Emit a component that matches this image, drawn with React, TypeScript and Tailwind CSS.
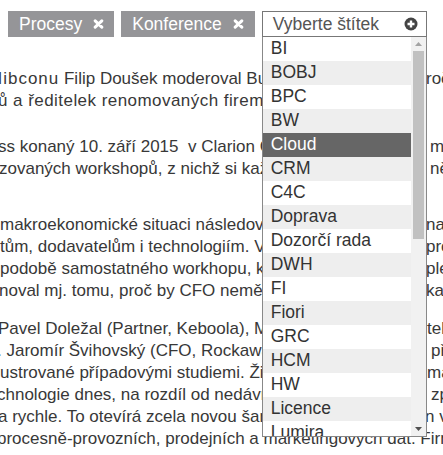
import React from "react";

function Tag({ label, pr }: { label: string; pr: string }) {
  return (
    <div className={"flex h-[26px] items-center gap-[11px] bg-[#959598] pl-[11px] text-white " + pr}>
      <span>{label}</span>
      <svg width="11" height="10" viewBox="0 0 11 10">
        <path d="M2.2 1.8 L8.8 8.2 M8.8 1.8 L2.2 8.2" stroke="#ffffff" strokeWidth="3" strokeLinecap="round" fill="none" />
      </svg>
    </div>
  );
}

const items = [
  "BI",
  "BOBJ",
  "BPC",
  "BW",
  "Cloud",
  "CRM",
  "C4C",
  "Doprava",
  "Dozorčí rada",
  "DWH",
  "FI",
  "Fiori",
  "GRC",
  "HCM",
  "HW",
  "Licence",
  "Lumira",
];

export default function App() {
  return (
    <div className="relative h-[455px] w-[443px] overflow-hidden bg-white font-['Liberation_Sans',Arial,sans-serif] text-[17px] text-[#383838]">
      <div className="flex items-start pl-[8px] pt-[11px] text-[17.5px]">
        <Tag label="Procesy" pr="pr-[10px]" />
        <div className="ml-[7px]">
          <Tag label="Konference" pr="pr-[11px]" />
        </div>
        <div className="relative z-10 ml-[7px] w-[165px]">
          <div className="flex h-[26px] items-center justify-between border border-[#777] bg-white pl-[10px] pr-[8px] text-[#555]">
            <span>Vyberte štítek</span>
            <svg width="14" height="14" viewBox="0 0 14 14">
              <circle cx="7" cy="7" r="6.5" fill="#444" />
              <path d="M7 3.5 V10.5 M3.5 7 H10.5" stroke="#fff" strokeWidth="2.4" fill="none" />
            </svg>
          </div>
          <div className="absolute left-0 top-full flex h-[400px] w-full overflow-hidden border-x border-b border-[#888] bg-white">
            <div className="flex flex-1 flex-col">
              {items.map((it, i) => (
                <div
                  key={it}
                  className={
                    "h-[24px] shrink-0 pl-[8px] leading-[22px] " +
                    (it === "Cloud"
                      ? "bg-[#666666] text-white"
                      : i % 2 === 1
                      ? "bg-[#eeeeee] text-[#333]"
                      : "bg-white text-[#333]")
                  }
                >
                  {it}
                </div>
              ))}
            </div>
            <div className="flex w-[15px] shrink-0 flex-col items-center bg-[#f1f1f1]">
              <svg className="mt-[5px]" width="7" height="4" viewBox="0 0 7 4">
                <path d="M0 4 L3.5 0 L7 4 Z" fill="#a3a3a3" />
              </svg>
              <div className="mt-[5px] h-[188px] w-[11px] bg-[#c1c1c1]" />
              <div className="flex-1" />
              <svg className="mb-[5px]" width="7" height="4" viewBox="0 0 7 4">
                <path d="M0 0 L7 0 L3.5 4 Z" fill="#505050" />
              </svg>
            </div>
          </div>
        </div>
      </div>

      <div className="mt-[31px] whitespace-pre leading-[22px]">
        <div className="flex h-[22px]">
          <div className="w-[426px] shrink-0 overflow-hidden">
            <div className="ml-[-12px]">
              <span className="tracking-[1px]">Mibconu</span>
              <span> Filip Doušek moderoval Business Intelligence </span>
            </div>
          </div>
          <span>ročník</span>
        </div>
        <div className="flex h-[22px]">
          <div className="w-[426px] shrink-0 overflow-hidden">
            <div className="ml-[-2px] tracking-[0.45px]">ů a ředitelek renomovaných firem a institucí </div>
          </div>
        </div>

        <div className="mt-[24px] flex h-[22px]">
          <div className="w-[430px] shrink-0 overflow-hidden">
            <div className="ml-[-2px]">ss konaný 10. září 2015  v Clarion Congress Hotelu </div>
          </div>
          <span>mnoha</span>
        </div>
        <div className="flex h-[22px]">
          <div className="w-[430px] shrink-0 overflow-hidden">
            <div className="ml-[-1px]">zovaných workshopů, z nichž si každý vybral </div>
          </div>
          <span>něco</span>
        </div>

        <div className="mt-[34px] flex h-[22px]">
          <div className="w-[426px] shrink-0 overflow-hidden">
            <div>makroekonomické situaci následovala diskuse </div>
          </div>
          <span>na</span>
        </div>
        <div className="flex h-[22px]">
          <div className="w-[426px] shrink-0 overflow-hidden">
            <div>tům, dodavatelům i technologiím. Velký </div>
          </div>
          <span>prostor</span>
        </div>
        <div className="flex h-[22px]">
          <div className="w-[426px] shrink-0 overflow-hidden">
            <div>podobě samostatného workhopu, kde se </div>
          </div>
          <span>plenér</span>
        </div>
        <div className="flex h-[22px]">
          <div className="w-[426px] shrink-0 overflow-hidden">
            <div className="ml-[-1px]">noval mj. tomu, proč by CFO neměla chybět </div>
          </div>
          <span>ka</span>
        </div>

        <div className="mt-[16px] flex h-[22px]">
          <div className="w-[427px] shrink-0 overflow-hidden">
            <div className="ml-[-2px]">Pavel Doležal (Partner, Keboola), Martin Vo </div>
          </div>
          <span>tel,</span>
        </div>
        <div className="flex h-[22px]">
          <div className="w-[431px] shrink-0 overflow-hidden">
            <div className="ml-[-3px]">. Jaromír Švihovský (CFO, Rockaway) a další </div>
          </div>
          <span>při</span>
        </div>
        <div className="flex h-[22px]">
          <div className="w-[427px] shrink-0 overflow-hidden">
            <div>ustrované případovými studiemi. Živá diskuse </div>
          </div>
          <span>má</span>
        </div>
        <div className="flex h-[22px]">
          <div className="w-[431px] shrink-0 overflow-hidden">
            <div className="ml-[-3px]">chnologie dnes, na rozdíl od nedávné minulosti </div>
          </div>
          <span>zp</span>
        </div>
        <div className="flex h-[22px]">
          <div className="w-[425px] shrink-0 overflow-hidden">
            <div className="ml-[-2px]">a rychle. To otevírá zcela novou šanci pro </div>
          </div>
          <span>n v</span>
        </div>
        <div className="flex h-[22px]">
          <div className="ml-[-3px]">procesně-provozních, prodejních a marketingových dat. Firmy</div>
        </div>
      </div>
    </div>
  );
}
